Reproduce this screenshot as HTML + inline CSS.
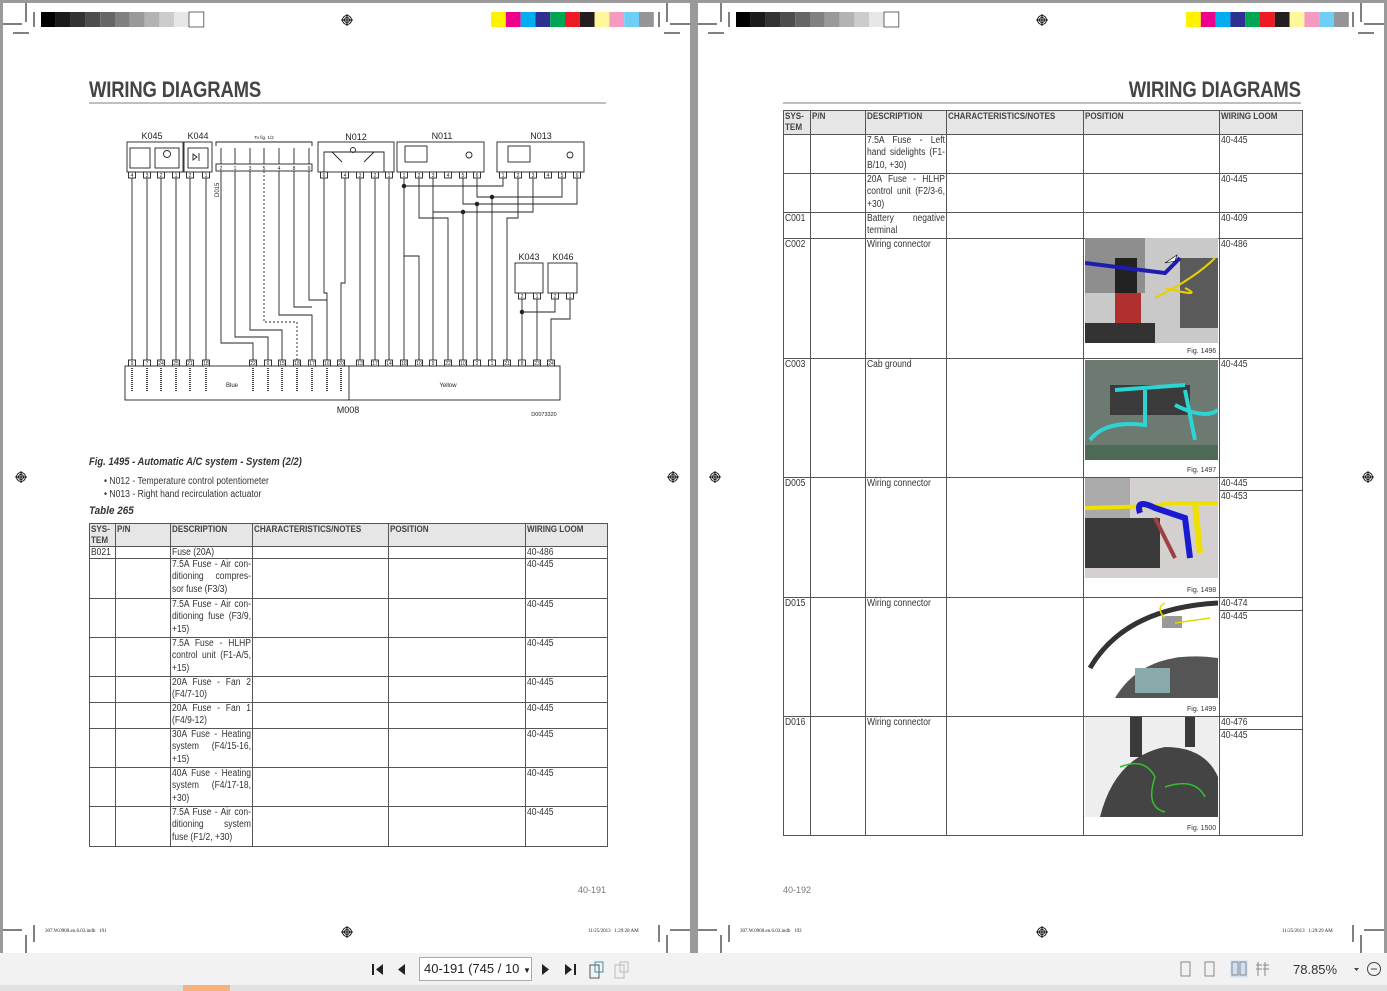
<!DOCTYPE html>
<html><head><meta charset="utf-8"><style>
*{margin:0;padding:0;box-sizing:border-box}
body{width:1387px;height:991px;background:#9a9a9a;position:relative;overflow:hidden;font-family:"Liberation Sans",sans-serif;color:#333}
.page{position:absolute;top:3px;height:950px;background:#fff}
.abs{position:absolute}
.title{position:absolute;font-weight:bold;font-size:22px;color:#444;transform:scaleX(.84);white-space:nowrap;letter-spacing:-.2px}
table{position:absolute;border-collapse:collapse;table-layout:fixed;font-size:10px;line-height:12.4px;color:#333}
td{border:1px solid #555;vertical-align:top;padding:0 1px;overflow:hidden;white-space:nowrap}
tr.h td{background:#e6e6e6;font-size:9.5px;line-height:11px;font-weight:bold;color:#444}
.l{display:block;width:117.6%;transform:scaleX(.85);transform-origin:left top;text-align:left}
.jl{text-align:justify;text-align-last:justify}
.sp{border-bottom:1px solid #555;margin:0 -1px;padding:0 1px}
.fig{position:absolute;font-size:7px;color:#333}
.tb{position:absolute;top:953px;left:0;width:1387px;height:32px;background:#f2f2f2}
.strip{position:absolute;top:985px;left:0;width:1387px;height:6px;background:#e1e1e1}
</style></head><body>
<div class="page" style="left:3px;width:687px"></div>
<div class="page" style="left:698px;width:686px"></div>

<svg class="abs" style="left:0;top:0" width="1387" height="991">
<g stroke="#555" stroke-width="1.5">
<line x1="26" y1="3" x2="26" y2="22"/><line x1="3" y1="24" x2="22" y2="24"/><line x1="34" y1="12" x2="34" y2="27"/><line x1="13" y1="33" x2="29" y2="33"/>
<line x1="667" y1="3" x2="667" y2="22"/><line x1="670" y1="24" x2="690" y2="24"/><line x1="659" y1="12" x2="659" y2="27"/><line x1="664" y1="33" x2="680" y2="33"/>
<line x1="721" y1="3" x2="721" y2="22"/><line x1="698" y1="24" x2="717" y2="24"/><line x1="729" y1="12" x2="729" y2="27"/><line x1="708" y1="33" x2="724" y2="33"/>
<line x1="1361" y1="3" x2="1361" y2="22"/><line x1="1364" y1="24" x2="1384" y2="24"/><line x1="1353" y1="12" x2="1353" y2="27"/><line x1="1358" y1="33" x2="1374" y2="33"/>
<line x1="26" y1="935" x2="26" y2="953"/><line x1="3" y1="930" x2="22" y2="930"/><line x1="34" y1="925" x2="34" y2="942"/>
<line x1="667" y1="935" x2="667" y2="953"/><line x1="670" y1="930" x2="690" y2="930"/><line x1="659" y1="925" x2="659" y2="942"/>
<line x1="721" y1="935" x2="721" y2="953"/><line x1="698" y1="930" x2="717" y2="930"/><line x1="729" y1="925" x2="729" y2="942"/>
<line x1="1361" y1="935" x2="1361" y2="953"/><line x1="1364" y1="930" x2="1384" y2="930"/><line x1="1353" y1="925" x2="1353" y2="942"/>
</g>
<line x1="89" y1="103" x2="606" y2="103" stroke="#aaa" stroke-width="1.5"/>
<line x1="783" y1="103" x2="1301" y2="103" stroke="#aaa" stroke-width="1.5"/>
<g id="dg" fill="none" stroke="#222" stroke-width="0.9"></g>
<g id="ex"></g>
</svg>

<div class="title" style="left:89px;top:77px;transform-origin:left top">WIRING DIAGRAMS</div>
<div class="title" style="right:86px;top:77px;transform-origin:right top">WIRING DIAGRAMS</div>

<div class="abs" style="left:89px;top:456px;font-size:11px;font-weight:bold;font-style:italic;color:#333;transform:scaleX(.86);transform-origin:left;white-space:nowrap">Fig. 1495 - Automatic A/C system - System (2/2)</div>
<div class="abs" style="left:104px;top:475px;font-size:10px;line-height:13px;color:#333;transform:scaleX(.86);transform-origin:left;white-space:nowrap">• N012 - Temperature control potentiometer<br>• N013 - Right hand recirculation actuator</div>
<div class="abs" style="left:89px;top:505px;font-size:11px;font-weight:bold;font-style:italic;color:#333;transform:scaleX(.9);transform-origin:left">Table 265</div>

<table style="left:89px;top:523px;width:518px">
<colgroup><col style="width:26px"><col style="width:55px"><col style="width:82px"><col style="width:136px"><col style="width:137px"><col style="width:82px"></colgroup>
<tr class="h" style="height:23px"><td><span class="l">SYS-<br>TEM</span></td><td><span class="l">P/N</span></td><td><span class="l">DESCRIPTION</span></td><td><span class="l">CHARACTERISTICS/NOTES</span></td><td><span class="l">POSITION</span></td><td><span class="l">WIRING LOOM</span></td></tr>
<tr style="height:12px"><td style="line-height:11px"><span class="l">B021</span></td><td></td><td style="line-height:11px"><span class="l">Fuse (20A)</span></td><td></td><td></td><td style="line-height:11px"><span class="l">40-486</span></td></tr>
<tr style="height:40px"><td></td><td></td><td><span class="l jl">7.5A Fuse - Air con-</span><span class="l jl">ditioning compres-</span><span class="l">sor fuse (F3/3)</span></td><td></td><td></td><td><span class="l">40-445</span></td></tr>
<tr style="height:39px"><td></td><td></td><td><span class="l jl">7.5A Fuse - Air con-</span><span class="l jl">ditioning fuse (F3/9,</span><span class="l">+15)</span></td><td></td><td></td><td><span class="l">40-445</span></td></tr>
<tr style="height:39px"><td></td><td></td><td><span class="l jl">7.5A Fuse - HLHP</span><span class="l jl">control unit (F1-A/5,</span><span class="l">+15)</span></td><td></td><td></td><td><span class="l">40-445</span></td></tr>
<tr style="height:25px"><td></td><td></td><td><span class="l jl">20A Fuse - Fan 2</span><span class="l">(F4/7-10)</span></td><td></td><td></td><td><span class="l">40-445</span></td></tr>
<tr style="height:26px"><td></td><td></td><td><span class="l jl">20A Fuse - Fan 1</span><span class="l">(F4/9-12)</span></td><td></td><td></td><td><span class="l">40-445</span></td></tr>
<tr style="height:39px"><td></td><td></td><td><span class="l jl">30A Fuse - Heating</span><span class="l jl">system (F4/15-16,</span><span class="l">+15)</span></td><td></td><td></td><td><span class="l">40-445</span></td></tr>
<tr style="height:39px"><td></td><td></td><td><span class="l jl">40A Fuse - Heating</span><span class="l jl">system (F4/17-18,</span><span class="l">+30)</span></td><td></td><td></td><td><span class="l">40-445</span></td></tr>
<tr style="height:40px"><td></td><td></td><td><span class="l jl">7.5A Fuse - Air con-</span><span class="l jl">ditioning system</span><span class="l">fuse (F1/2, +30)</span></td><td></td><td></td><td><span class="l">40-445</span></td></tr>
</table>

<table style="left:783px;top:110px;width:519px">
<colgroup><col style="width:27px"><col style="width:55px"><col style="width:81px"><col style="width:137px"><col style="width:136px"><col style="width:83px"></colgroup>
<tr class="h" style="height:24px"><td><span class="l">SYS-<br>TEM</span></td><td><span class="l">P/N</span></td><td><span class="l">DESCRIPTION</span></td><td><span class="l">CHARACTERISTICS/NOTES</span></td><td><span class="l">POSITION</span></td><td><span class="l">WIRING LOOM</span></td></tr>
<tr style="height:39px"><td></td><td></td><td><span class="l jl">7.5A Fuse - Left</span><span class="l jl">hand sidelights (F1-</span><span class="l">B/10, +30)</span></td><td></td><td></td><td><span class="l">40-445</span></td></tr>
<tr style="height:39px"><td></td><td></td><td><span class="l jl">20A Fuse - HLHP</span><span class="l jl">control unit (F2/3-6,</span><span class="l">+30)</span></td><td></td><td></td><td><span class="l">40-445</span></td></tr>
<tr style="height:25px"><td><span class="l">C001</span></td><td></td><td><span class="l jl">Battery negative</span><span class="l">terminal</span></td><td></td><td></td><td><span class="l">40-409</span></td></tr>
<tr style="height:120px"><td><span class="l">C002</span></td><td></td><td><span class="l">Wiring connector</span></td><td></td><td></td><td><span class="l">40-486</span></td></tr>
<tr style="height:119px"><td><span class="l">C003</span></td><td></td><td><span class="l">Cab ground</span></td><td></td><td></td><td><span class="l">40-445</span></td></tr>
<tr style="height:120px"><td><span class="l">D005</span></td><td></td><td><span class="l">Wiring connector</span></td><td></td><td></td><td style="line-height:12px"><div class="sp"><span class="l">40-445</span></div><span class="l">40-453</span></td></tr>
<tr style="height:119px"><td><span class="l">D015</span></td><td></td><td><span class="l">Wiring connector</span></td><td></td><td></td><td style="line-height:12px"><div class="sp"><span class="l">40-474</span></div><span class="l">40-445</span></td></tr>
<tr style="height:119px"><td><span class="l">D016</span></td><td></td><td><span class="l">Wiring connector</span></td><td></td><td></td><td style="line-height:12px"><div class="sp"><span class="l">40-476</span></div><span class="l">40-445</span></td></tr>
</table>

<svg class="abs" style="left:1085px;top:238px" width="133" height="105"><rect width="133" height="105" fill="#c9c9c9"/><rect x="0" y="0" width="60" height="55" fill="#8e8e8e"/><rect x="95" y="20" width="38" height="70" fill="#5a5a5a"/><rect x="30" y="20" width="22" height="65" fill="#222"/><rect x="30" y="55" width="26" height="30" fill="#b03030"/><rect x="0" y="85" width="70" height="20" fill="#333"/><path d="M0 25 L80 35 L95 20" stroke="#1c1cb0" stroke-width="4" fill="none"/><path d="M70 60 Q110 40 130 20 M80 50 Q120 60 100 50" stroke="#e8d000" stroke-width="2" fill="none"/><path d="M80 25 l12 -8 l-2 6z" fill="#fff" stroke="#000" stroke-width=".6"/></svg>
<svg class="abs" style="left:1085px;top:360px" width="133" height="100"><rect width="133" height="100" fill="#6d7a72"/><rect x="25" y="25" width="80" height="30" fill="#3b3b3b"/><path d="M5 80 Q20 60 60 65 L60 30 M30 30 L100 25 M100 30 L110 80 M90 45 Q120 60 133 50" stroke="#2cd4d4" stroke-width="4" fill="none"/><rect x="0" y="85" width="133" height="15" fill="#4e6a55"/></svg>
<svg class="abs" style="left:1085px;top:478px" width="133" height="100"><rect width="133" height="100" fill="#d4d0d0"/><rect x="0" y="40" width="75" height="50" fill="#3a3a3a"/><rect x="0" y="0" width="45" height="40" fill="#aaa"/><path d="M0 30 L70 28 L85 25 L133 25" stroke="#f0e000" stroke-width="4" fill="none"/><path d="M55 35 Q50 20 70 30 L100 40 L105 80" stroke="#1a1ad0" stroke-width="6" fill="none"/><path d="M70 40 L90 80" stroke="#a04040" stroke-width="4"/><path d="M110 25 L115 75" stroke="#f0e000" stroke-width="6"/></svg>
<svg class="abs" style="left:1085px;top:598px" width="133" height="100"><rect width="133" height="100" fill="#fff"/><path d="M5 70 Q40 10 133 5" stroke="#333" stroke-width="5" fill="none"/><path d="M30 100 Q60 50 133 60 L133 100z" fill="#555"/><rect x="50" y="70" width="35" height="25" fill="#8aa"/><rect x="77" y="18" width="20" height="12" fill="#999"/><path d="M80 20 Q70 10 80 5 M90 25 L125 20" stroke="#dd0" stroke-width="1.5" fill="none"/></svg>
<svg class="abs" style="left:1085px;top:717px" width="133" height="100"><rect width="133" height="100" fill="#eee"/><path d="M15 100 Q30 40 80 30 Q120 30 133 60 L133 100z" fill="#444"/><rect x="45" y="0" width="12" height="40" fill="#3a3a3a"/><rect x="100" y="0" width="10" height="30" fill="#3a3a3a"/><path d="M35 50 Q60 40 70 60 Q60 90 80 95 M80 70 Q110 60 120 80" stroke="#30c030" stroke-width="1.5" fill="none"/></svg>
<div class="fig" style="left:1187px;top:348px">Fig. 1496</div>
<div class="fig" style="left:1187px;top:467px">Fig. 1497</div>
<div class="fig" style="left:1187px;top:587px">Fig. 1498</div>
<div class="fig" style="left:1187px;top:706px">Fig. 1499</div>
<div class="fig" style="left:1187px;top:825px">Fig. 1500</div>

<div class="abs" style="left:578px;top:885px;font-size:9px;color:#777">40-191</div>
<div class="abs" style="left:783px;top:885px;font-size:9px;color:#777">40-192</div>
<div class="abs" style="left:45px;top:929px;font-size:5px;font-family:'Liberation Serif',serif;color:#222">307.W.0900.en.6.03.indb &nbsp; 191</div>
<div class="abs" style="left:588px;top:929px;font-size:5px;font-family:'Liberation Serif',serif;color:#222">11/25/2013 &nbsp; 1:29:28 AM</div>
<div class="abs" style="left:740px;top:929px;font-size:5px;font-family:'Liberation Serif',serif;color:#222">307.W.0900.en.6.03.indb &nbsp; 192</div>
<div class="abs" style="left:1282px;top:929px;font-size:5px;font-family:'Liberation Serif',serif;color:#222">11/25/2013 &nbsp; 1:29:29 AM</div>

<div class="tb">
<svg class="abs" style="left:0;top:0" width="1387" height="32">
<g fill="#222"><rect x="372" y="11" width="2" height="11"/><path d="M383 11 L376 16.5 L383 22z"/><path d="M405 11 L398 16.5 L405 22z"/><path d="M542 11 L549 16.5 L542 22z"/><path d="M565 11 L572 16.5 L565 22z"/><rect x="574" y="11" width="2" height="11"/></g>
<g fill="none" stroke="#555"><rect x="590" y="12" width="9" height="13"/><rect x="595" y="9" width="8" height="10" stroke="#3a8fb7"/><rect x="615" y="12" width="9" height="13" stroke="#bbb"/><rect x="620" y="9" width="8" height="10" stroke="#bbb"/>
<rect x="1181" y="9" width="9" height="14" stroke="#888"/><rect x="1205" y="9" width="9" height="14" stroke="#888"/><rect x="1231" y="8" width="16" height="16" fill="#cfe0f3" stroke="#cfe0f3"/><rect x="1232" y="9" width="6" height="13" stroke="#888"/><rect x="1240" y="9" width="6" height="13" stroke="#888"/><path d="M1258 9v14M1265 9v14M1256 12h6M1256 16h6M1263 12h6M1263 16h6" stroke="#888"/><circle cx="1374" cy="16" r="6.5" stroke="#444"/><path d="M1371 16h6" stroke="#444"/></g>
<path d="M1354 15h5l-2.5 3z" fill="#444"/>
</svg>
<div class="abs" style="left:419px;top:4px;width:113px;height:24px;border:1px solid #aaa;background:#fff;font-size:13px;line-height:22px;padding-left:4px;color:#222;white-space:nowrap;overflow:hidden">40-191 (745 / 10 <span style="font-size:8px">▼</span></div>
<div class="abs" style="left:1293px;top:9px;font-size:13px;color:#333">78.85%</div>
</div>
<div class="strip"><div class="abs" style="left:183px;top:0;width:47px;height:6px;background:#f5b07c"></div></div>

<script>
var ns="http://www.w3.org/2000/svg",g=document.getElementById('dg'),ex=document.getElementById('ex');
function el(p,t,a){var e=document.createElementNS(ns,t);for(var k in a)e.setAttribute(k,a[k]);p.appendChild(e);return e}
function pl(pts,dash){var a={points:pts};if(dash)a['stroke-dasharray']='2,2';el(g,'polyline',a)}
function txt(x,y,s,fs,anc,w){var t=el(ex,'text',{x:x,y:y,'font-size':fs,'font-family':'Liberation Sans, sans-serif','text-anchor':anc||'middle',fill:'#222','font-weight':w||'normal'});t.textContent=s}
[[127,142,56,30],[184,142,28,30],[318,142,76,30],[397,142,87,30],[497,142,87,30],[515,263,28,30],[548,263,29,30],[125,366,435,34]].forEach(function(b){el(g,'rect',{x:b[0],y:b[1],width:b[2],height:b[3]})});
el(g,'line',{x1:349,y1:366,x2:349,y2:400});
pl('216,146 216,142 312,142 312,146');el(g,'rect',{x:216,y:164,width:96,height:7});
[221,235,250,264,279,294,309].forEach(function(x){el(g,'line',{x1:x,y1:148,x2:x,y2:164})});
function pin(x,y,n){el(g,'rect',{x:x-3.5,y:y,width:7,height:6,fill:'#fff'});txt(x,y+5,n,5)}
var tp=[[132,'4'],[147,'3'],[161,'2'],[176,'1'],[190,'2'],[206,'1'],[324,'6'],[345,'4'],[360,'3'],[375,'2'],[389,'1'],[404,'1'],[419,'2'],[433,'3'],[448,'4'],[463,'5'],[477,'6'],[503,'1'],[518,'2'],[533,'3'],[548,'4'],[562,'5'],[577,'6']];
tp.forEach(function(p){pin(p[0],172,p[1])});
[[221,'2'],[235,'1'],[250,'3'],[264,'5'],[279,'4'],[294,'8'],[309,'9']].forEach(function(p){txt(p[0],170,p[1],5)});
var bx=[132,147,161,176,190,206,253,268,282,297,312,327,341,360,375,389,404,419,433,448,463,477,492,507,522,537,551],bl='9 7 24 25 21 18 22 6 15 18 17 16 20 13 17 14 18 10 9 22 10 2 1 21 8 23 24'.split(' ');
bx.forEach(function(x,i){pin(x,360,bl[i])});
[[522,'2'],[537,'1'],[555,'2'],[570,'1']].forEach(function(p){pin(p[0],293,p[1])});
[132,147,161,176,190,206,360,375,389].forEach(function(x){pl(x+',178 '+x+',360')});
pl('221,171 221,343 253,343 253,360');pl('235,171 235,337 268,337 268,360');pl('250,171 250,330 282,330 282,360');
pl('264,171 264,322 297,322 297,360',1);pl('279,171 279,315 312,315 312,360');pl('294,171 294,307 312,307');pl('309,171 309,300 327,300');
pl('324,178 324,293 327,293 327,360');pl('345,178 345,283 341,283 341,360');
pl('404,178 404,256 419,256 419,360');pl('419,178 419,218 448,218 448,360');pl('433,178 433,212 533,212 533,178');
pl('463,178 463,204 577,204 577,178');pl('477,178 477,197 562,197 562,178');pl('503,178 503,186 404,186');
pl('518,178 518,218 507,218 507,360');pl('463,212 463,360');pl('477,204 477,360');pl('492,197 492,360');pl('433,212 433,360');pl('404,256 404,360');
pl('522,299 522,360');pl('537,299 537,360');pl('555,299 555,312 522,312');pl('570,299 570,319 551,319 551,360');
[[404,186],[463,212],[477,204],[492,197],[522,312]].forEach(function(d){el(g,'circle',{cx:d[0],cy:d[1],r:1.8,fill:'#222'})});
el(g,'rect',{x:130,y:148,width:20,height:20});el(g,'rect',{x:155,y:148,width:24,height:20});el(g,'circle',{cx:167,cy:154,r:3.5});el(g,'rect',{x:188,y:148,width:20,height:20});
el(g,'path',{d:'M193 154 l4 3 l-4 3z M199 153 v8'});
el(g,'path',{d:'M324 172 v-20 h60 v20 M332 152 l10 10 M374 152 l-10 10'});el(g,'circle',{cx:353,cy:150,r:2.5});
el(g,'rect',{x:405,y:146,width:22,height:16});el(g,'rect',{x:508,y:146,width:22,height:16});el(g,'circle',{cx:469,cy:155,r:3});el(g,'circle',{cx:570,cy:155,r:3});
txt(152,139,'K045',9);txt(198,139,'K044',9);txt(264,139,'To fig. 1/2',4.5);txt(356,140,'N012',9);txt(442,139,'N011',9);txt(541,139,'N013',9);
txt(529,260,'K043',9);txt(563,260,'K046',9);txt(348,413,'M008',9);txt(544,416,'D0073320',5.5);
txt(232,387,'Blue',6);txt(448,387,'Yellow',6);
var vt=el(ex,'text',{x:0,y:0,'font-size':6,'font-family':'Liberation Sans, sans-serif',fill:'#222',transform:'translate(219,197) rotate(-90)'});vt.textContent='D015';
[132,147,161,176,190,206,253,268,282,297,312,327,341].forEach(function(x){el(g,'line',{x1:x,y1:368,x2:x,y2:392,stroke:'#444','stroke-width':2,'stroke-dasharray':'1,1'})});
[[347,20],[1042,20],[21,477],[673,477],[715,477],[1368,477],[347,932],[1042,932]].forEach(function(c){var gg=el(ex,'g',{stroke:'#111',fill:'none','stroke-width':1});el(gg,'circle',{cx:c[0],cy:c[1],r:4.5});el(gg,'circle',{cx:c[0],cy:c[1],r:2.5});el(gg,'path',{d:'M'+(c[0]-6)+' '+c[1]+'h12M'+c[0]+' '+(c[1]-6)+'v12'})});
var grays=['#000','#1a1a1a','#333','#4d4d4d','#666','#808080','#999','#b3b3b3','#ccc','#e6e6e6','#fff'];
var cols=['#fff200','#ec008c','#00aeef','#2e3192','#00a651','#ed1c24','#231f20','#fff799','#f49ac1','#6dcff6','#939598'];
[[41,491],[736,1186]].forEach(function(o){grays.forEach(function(c,i){var a={x:o[0]+i*14.8,y:12,width:14.8,height:15,fill:c};if(i==10){a.stroke='#444';a['stroke-width']=.8}el(ex,'rect',a)});cols.forEach(function(c,i){el(ex,'rect',{x:o[1]+i*14.8,y:12,width:14.8,height:15,fill:c})})});
</script>
</body></html>
